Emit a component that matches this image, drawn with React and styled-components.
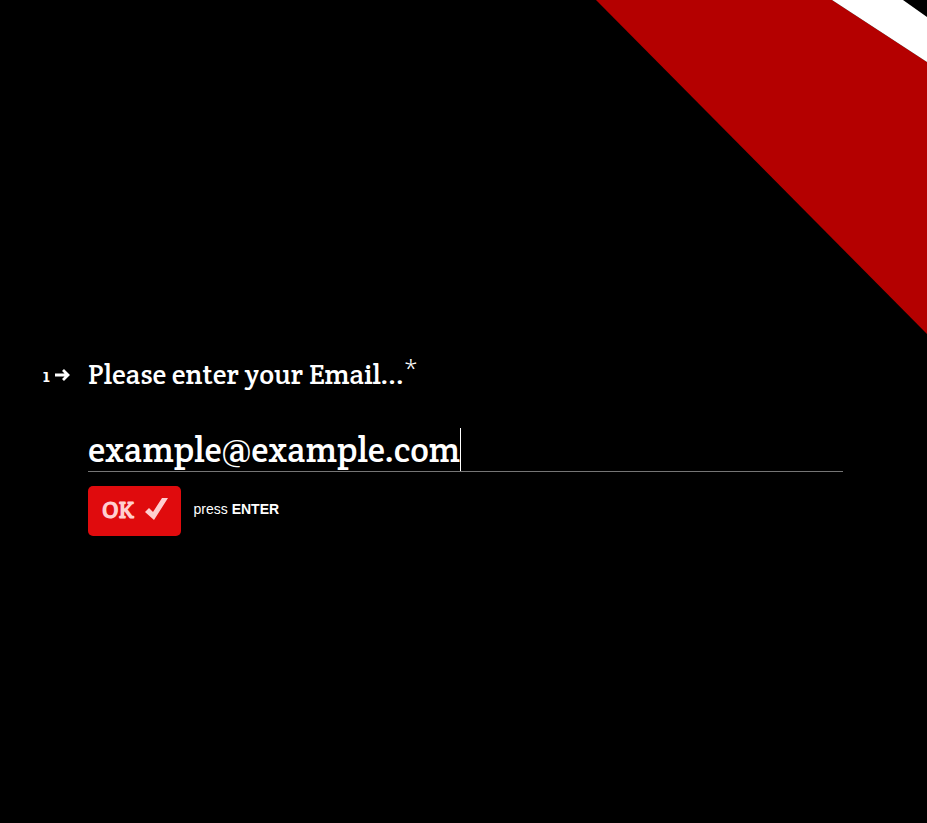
import React, { useState } from "react";
import styled, { createGlobalStyle } from "styled-components";

const GlobalStyle = createGlobalStyle`
  *, *::before, *::after { box-sizing: border-box; }
  body { margin: 0; background: #000; color: #fff; }
`;

const slab = `"Crete Round", "DejaVu Serif Condensed", "DejaVu Serif", serif`;

const Page = styled.main`
  position: relative;
  min-height: 100vh;
  padding: 355px 84px 40px 40px;
  overflow: hidden;
  background: #000;
  font-family: ${slab};
`;

const Corner = styled.svg`
  position: absolute;
  top: 0;
  right: 0;
  width: 331px;
  height: 334px;
`;

const Question = styled.form`
  display: grid;
  grid-template-columns: 48px minmax(0, 1fr);
`;

const Step = styled.span`
  display: flex;
  align-items: center;
  gap: 5px;
  height: 40px;
  padding-left: 3px;
  font-size: 20px;
`;

const Body = styled.div`
  display: flex;
  flex-direction: column;
`;

const Title = styled.label`
  display: flex;
  height: 38px;
  font-size: 28px;
  line-height: 38px;
  white-space: nowrap;
`;

const Required = styled.span`
  font-family: "Noto Sans", sans-serif;
  font-size: 24px;
  line-height: 26px;
  font-weight: 300;
`;

const Field = styled.div`
  display: flex;
  height: 44px;
  margin-top: 35px;
  border-bottom: 1px solid #757575;
`;

const EmailInput = styled.input`
  field-sizing: content;
  min-width: 1px;
  max-width: 100%;
  height: 43px;
  padding: 0;
  border: 0;
  outline: 0;
  background: transparent;
  color: #fff;
  caret-color: transparent;
  font-family: ${slab};
  font-size: 35px;
  line-height: 43px;
`;

const Caret = styled.span`
  width: 1px;
  height: 43px;
  background: #fff;
`;

const Actions = styled.div`
  display: flex;
  align-items: center;
  gap: 13px;
  margin-top: 14px;
`;

const OkButton = styled.button`
  display: flex;
  align-items: center;
  gap: 10px;
  height: 50px;
  padding: 0 13px 4px 14px;
  border: 0;
  border-radius: 5px;
  background: #e00b0d;
  color: #ffcfd0;
  font-family: ${slab};
  font-size: 24px;
  font-weight: 700;
  cursor: pointer;
`;

const Hint = styled.span`
  padding-bottom: 4px;
  font-family: "Liberation Sans", Arial, sans-serif;
  font-size: 14px;
`;

export default function App() {
  const [email, setEmail] = useState("example@example.com");
  return (
    <Page>
      <GlobalStyle />
      <Corner viewBox="0 0 331 334" aria-hidden="true">
        <path fill="#b40000" d="M0 0H236L331 62V334Z" />
        <path fill="#fff" d="M236 0H307L331 17V62Z" />
      </Corner>
      <Question onSubmit={(e) => e.preventDefault()}>
        <Step>
          1
          <svg width="15" height="12" viewBox="0 0 15 12" fill="none" stroke="#fff" strokeWidth="2.8" aria-hidden="true">
            <path d="M0 6H13M8 1L13 6L8 11" />
          </svg>
        </Step>
        <Body>
          <Title htmlFor="email">
            Please enter your Email...
            <Required>*</Required>
          </Title>
          <Field>
            <EmailInput
              id="email"
              type="text"
              inputMode="email"
              required
              spellCheck={false}
              value={email}
              onChange={(e) => setEmail(e.target.value)}
            />
            <Caret />
          </Field>
          <Actions>
            <OkButton type="submit">
              OK
              <svg width="23" height="22" viewBox="0 0 23 22" fill="currentColor" aria-hidden="true">
                <path d="M0 14L4 10L8 14L17 0H23L9 22Z" />
              </svg>
            </OkButton>
            <Hint>
              press <strong>ENTER</strong>
            </Hint>
          </Actions>
        </Body>
      </Question>
    </Page>
  );
}
